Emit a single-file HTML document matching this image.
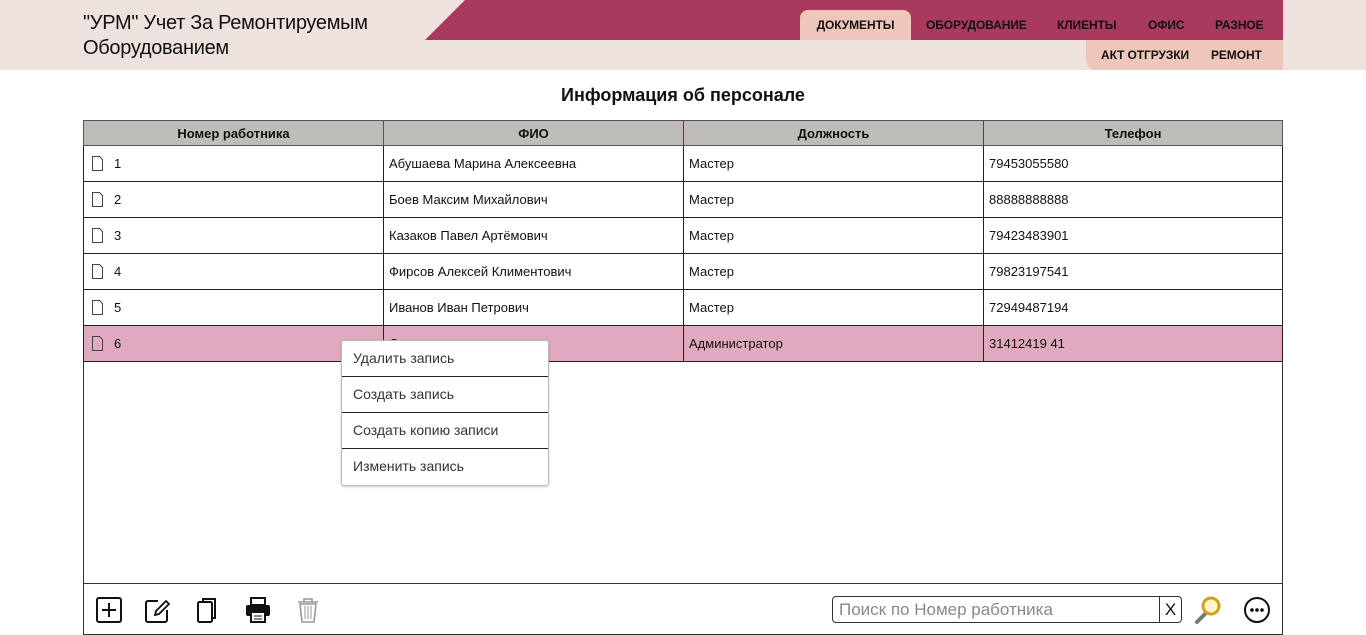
<!DOCTYPE html>
<html><head><meta charset="utf-8"><style>
*{box-sizing:border-box;margin:0;padding:0}
body{width:1366px;height:635px;background:#fff;font-family:"Liberation Sans","Noto Sans CJK SC",sans-serif;position:relative;overflow:hidden;color:#111}
.hdr{position:absolute;left:0;top:0;width:1366px;height:70px;background:#ede2dd}
.title{position:absolute;left:83px;top:11px;font-size:20px;line-height:25px;color:#111;letter-spacing:-0.3px}
.band{position:absolute;left:425px;top:0;width:858px;height:40px;background:#a93a5e;clip-path:polygon(40px 0,100% 0,100% 100%,0 100%)}
.tab{position:absolute;top:10px;height:30px;line-height:30px;font-size:12px;font-weight:bold;color:#111;letter-spacing:-0.1px}
.act{background:#eec7ba;border-radius:8px 8px 0 0}
.sub{position:absolute;left:1086px;top:40px;width:197px;height:30px;background:#eec7ba;border-radius:0 0 0 10px}
.h1{position:absolute;left:0;width:1366px;top:85px;text-align:center;font-size:18px;font-weight:bold}
.box{position:absolute;left:83px;top:120px;width:1200px;height:515px;border:1px solid #333}
table{position:absolute;left:83px;top:120px;border-collapse:collapse;width:1200px}
td,th{border:1px solid #222;font-size:13px;height:36px;padding-left:5px;text-align:left;vertical-align:middle}
th{height:25px;background:#bdbcb6;text-align:center;font-size:13px;padding:0;border-color:#555}
.c{display:flex;align-items:center}
.doc{display:block;width:11px;height:15px;margin:0 11px 0 3px}
.sel td{background:#e0a9bf}
.menu{position:absolute;left:341px;top:340px;width:208px;height:146px;background:#fff;border:1px solid #bbb;border-radius:3px;box-shadow:0 1px 2px rgba(0,0,0,.2)}
.menu div{height:36px;line-height:35px;padding-left:11px;font-size:14px;color:#333;border-bottom:1px solid #222}
.menu div:last-child{border:none}
.foot{position:absolute;left:83px;top:583px;width:1200px;border-top:1px solid #333}
.search{position:absolute;left:832px;top:596px;width:350px;height:27px;border:1px solid #333;border-radius:4px;font-size:17px;color:#888;line-height:25px;padding-left:6px}
.x{position:absolute;right:0;top:0;width:22px;height:25px;border-left:1px solid #333;color:#111;text-align:center;font-size:17px}
</style></head><body>
<div class="hdr"></div>
<div class="title">"УРМ" Учет За Ремонтируемым<br>Оборудованием</div>
<div class="band"></div>
<div class="tab act" style="left:800px;width:111px;text-align:center">ДОКУМЕНТЫ</div>
<div class="tab" style="left:926px">ОБОРУДОВАНИЕ</div>
<div class="tab" style="left:1057px">КЛИЕНТЫ</div>
<div class="tab" style="left:1148px">ОФИС</div>
<div class="tab" style="left:1215px">РАЗНОЕ</div>
<div class="sub"></div>
<div class="tab" style="left:1101px;top:40px">АКТ ОТГРУЗКИ</div>
<div class="tab" style="left:1211px;top:40px">РЕМОНТ</div>
<div class="h1">Информация об персонале</div>
<div class="box"></div>
<table>
<tr style="height:25px"><th style="width:300px">Номер работника</th><th style="width:300px;border-right-color:#2a4a8a">ФИО</th><th style="width:300px;border-right-color:#2a4a8a">Должность</th><th>Телефон</th></tr>
<tr><td><div class="c"><svg class="doc" viewBox="0 0 11 15"><path d="M.5.5h7l3 3v11H.5z" fill="#fff" stroke="#444"/></svg>1</div></td><td>Абушаева Марина Алексеевна</td><td>Мастер</td><td>79453055580</td></tr>
<tr><td><div class="c"><svg class="doc" viewBox="0 0 11 15"><path d="M.5.5h7l3 3v11H.5z" fill="#fff" stroke="#444"/></svg>2</div></td><td>Боев Максим Михайлович</td><td>Мастер</td><td>88888888888</td></tr>
<tr><td><div class="c"><svg class="doc" viewBox="0 0 11 15"><path d="M.5.5h7l3 3v11H.5z" fill="#fff" stroke="#444"/></svg>3</div></td><td>Казаков Павел Артёмович</td><td>Мастер</td><td>79423483901</td></tr>
<tr><td><div class="c"><svg class="doc" viewBox="0 0 11 15"><path d="M.5.5h7l3 3v11H.5z" fill="#fff" stroke="#444"/></svg>4</div></td><td>Фирсов Алексей Климентович</td><td>Мастер</td><td>79823197541</td></tr>
<tr><td><div class="c"><svg class="doc" viewBox="0 0 11 15"><path d="M.5.5h7l3 3v11H.5z" fill="#fff" stroke="#444"/></svg>5</div></td><td>Иванов Иван Петрович</td><td>Мастер</td><td>72949487194</td></tr>
<tr class="sel"><td><div class="c"><svg class="doc" viewBox="0 0 11 15"><path d="M.5.5h7l3 3v11H.5z" fill="none" stroke="#444"/></svg>6</div></td><td>С</td><td>Администратор</td><td>31412419 41</td></tr>
</table>
<div class="menu"><div>Удалить запись</div><div>Создать запись</div><div>Создать копию записи</div><div>Изменить запись</div></div>
<div class="foot"></div>
<svg style="position:absolute;left:95px;top:596px" width="230" height="28" viewBox="0 0 230 28">
<rect x="2" y="2" width="24" height="24" rx="2" fill="none" stroke="#111" stroke-width="2"/><path d="M14 7v14M7 14h14" stroke="#111" stroke-width="2"/>
<path d="M63 5H53a2 2 0 0 0-2 2v17a2 2 0 0 0 2 2h17a2 2 0 0 0 2-2V14" fill="none" stroke="#111" stroke-width="2"/><path d="M60 19l1-4 10-10 3 3-10 10z" fill="none" stroke="#111" stroke-width="1.8"/>
<rect x="103" y="6" width="14" height="20" rx="1.5" fill="none" stroke="#111" stroke-width="2"/><path d="M108 6V3h12v19h-3" fill="none" stroke="#111" stroke-width="2"/>
<rect x="156" y="2" width="14" height="7" fill="none" stroke="#111" stroke-width="2"/><rect x="151" y="9" width="24" height="11" rx="2" fill="#111"/><rect x="156" y="16" width="14" height="10" fill="#fff" stroke="#111" stroke-width="2"/><path d="M159 20h8M159 23h8" stroke="#111"/>
<path d="M203 6h20M209 6V3h8v3M205 8l2 18h12l2-18z" fill="none" stroke="#999" stroke-width="1.6"/><path d="M210 10v13M213 10v13M216 10v13" stroke="#999"/>
</svg>
<div class="search">Поиск по Номер работника<div class="x">X</div></div>
<svg style="position:absolute;left:1193px;top:595px" width="30" height="30" viewBox="0 0 30 30"><path d="M4 27l8-8" stroke="#777" stroke-width="4" stroke-linecap="round"/><circle cx="18" cy="11" r="8" fill="#fff6cc" stroke="#d4a019" stroke-width="3"/></svg>
<svg style="position:absolute;left:1243px;top:596px" width="28" height="28" viewBox="0 0 28 28"><circle cx="14" cy="14" r="12" fill="none" stroke="#111" stroke-width="2"/><circle cx="9" cy="14" r="1.8"/><circle cx="14" cy="14" r="1.8"/><circle cx="19" cy="14" r="1.8"/></svg>
</body></html>
